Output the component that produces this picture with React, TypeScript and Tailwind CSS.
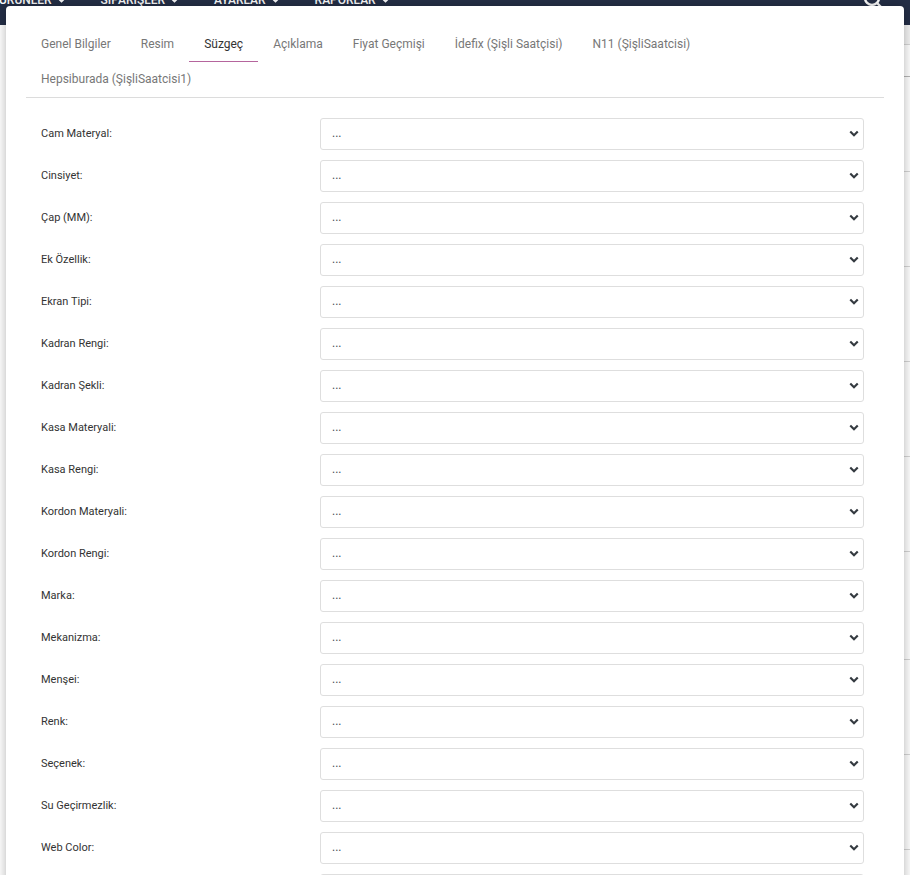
import React from 'react'

const font = { fontFamily: 'Roboto, sans-serif' }

const navItems = ['ÜRÜNLER', 'SİPARİŞLER', 'AYARLAR', 'RAPORLAR']

const tabs = [
  'Genel Bilgiler',
  'Resim',
  'Süzgeç',
  'Açıklama',
  'Fiyat Geçmişi',
  'İdefix (Şişli Saatçisi)',
  'N11 (ŞişliSaatcisi)',
  'Hepsiburada (ŞişliSaatcisi1)',
]

const fields = [
  'Cam Materyal',
  'Cinsiyet',
  'Çap (MM)',
  'Ek Özellik',
  'Ekran Tipi',
  'Kadran Rengi',
  'Kadran Şekli',
  'Kasa Materyali',
  'Kasa Rengi',
  'Kordon Materyali',
  'Kordon Rengi',
  'Marka',
  'Mekanizma',
  'Menşei',
  'Renk',
  'Seçenek',
  'Su Geçirmezlik',
  'Web Color',
  'Yaş Grubu',
]

// row heights of the table sitting behind the modal
const backRows = [20, 32, 95, 95, 95, 95, 95, 108, 95, 95]

const Chevron = ({ className }: { className: string }) => (
  <svg className={className} viewBox="0 0 12 8" fill="none">
    <path d="M1.5 1.6 6 6l4.5-4.4" stroke="#343a40" strokeWidth="2.6" />
  </svg>
)

const App = () => {
  return (
    <div
      className="relative h-[875px] w-[910px] overflow-hidden bg-white"
      style={font}
    >
      <div className="flex h-[25px] items-end overflow-hidden bg-[#252f47] pb-[18px]">
        <div className="flex shrink-0 -translate-x-[1px] items-center">
          {navItems.map((item) => (
            <div
              key={item}
              className="mr-[36px] flex items-center gap-[6px] text-[12px] leading-[14px] font-medium text-white"
            >
              {item}
              <Chevron className="h-[5px] w-[7px] [&_path]:stroke-white" />
            </div>
          ))}
        </div>
        <svg
          className="absolute top-[-11px] left-[863px] h-[20px] w-[20px]"
          viewBox="0 0 20 20"
          fill="none"
          stroke="white"
          strokeWidth="2.4"
        >
          <circle cx="9" cy="9" r="7" />
          <path d="m14 14 5 5" />
        </svg>
      </div>

      <div className="ml-8 flex flex-col">
        {backRows.map((h, i) => (
          <div
            key={i}
            className={
              i === 0
                ? 'shrink-0 border-b border-[#d5d5d5] bg-[#f3f3f3]'
                : i === 1
                  ? 'shrink-0 border-b border-[#b5b5b5]'
                  : 'shrink-0 border-b border-[#d5d5d5]'
            }
            style={{ height: h }}
          />
        ))}
      </div>

      <div className="absolute top-[6px] left-[6px] w-[898px] rounded-[4px] bg-white px-5 pt-[21px] shadow-[0_0_12px_rgba(0,0,0,0.3)]">
        <div className="flex flex-wrap border-b border-[#dcdcdc]">
          {tabs.map((tab) => (
            <div
              key={tab}
              className={
                tab === 'Süzgeç'
                  ? 'h-[35px] border-b border-[#b5659d] px-[15px] pt-[9px] text-[12px] leading-[16px] text-[#333333]'
                  : 'h-[35px] px-[15px] pt-[9px] text-[12px] leading-[16px] text-[#777777]'
              }
            >
              {tab}
            </div>
          ))}
        </div>

        <div className="flex flex-col gap-[10px] pt-5 pr-5 pl-[15px]">
          {fields.map((field) => (
            <div key={field} className="grid grid-cols-[279px_1fr]">
              <label className="pt-[9px] text-[11px] leading-[14px] text-[#333333]">
                {field}:
              </label>
              <div className="relative h-[32px] rounded-[3px] border border-[#dedede] bg-white pt-[7px] pl-[11px] text-[12px] leading-[14px] text-[#495057]">
                ...
                <Chevron className="absolute top-[11px] right-[4px] h-[7px] w-[10px]" />
              </div>
            </div>
          ))}
        </div>
      </div>
    </div>
  )
}

export default App
